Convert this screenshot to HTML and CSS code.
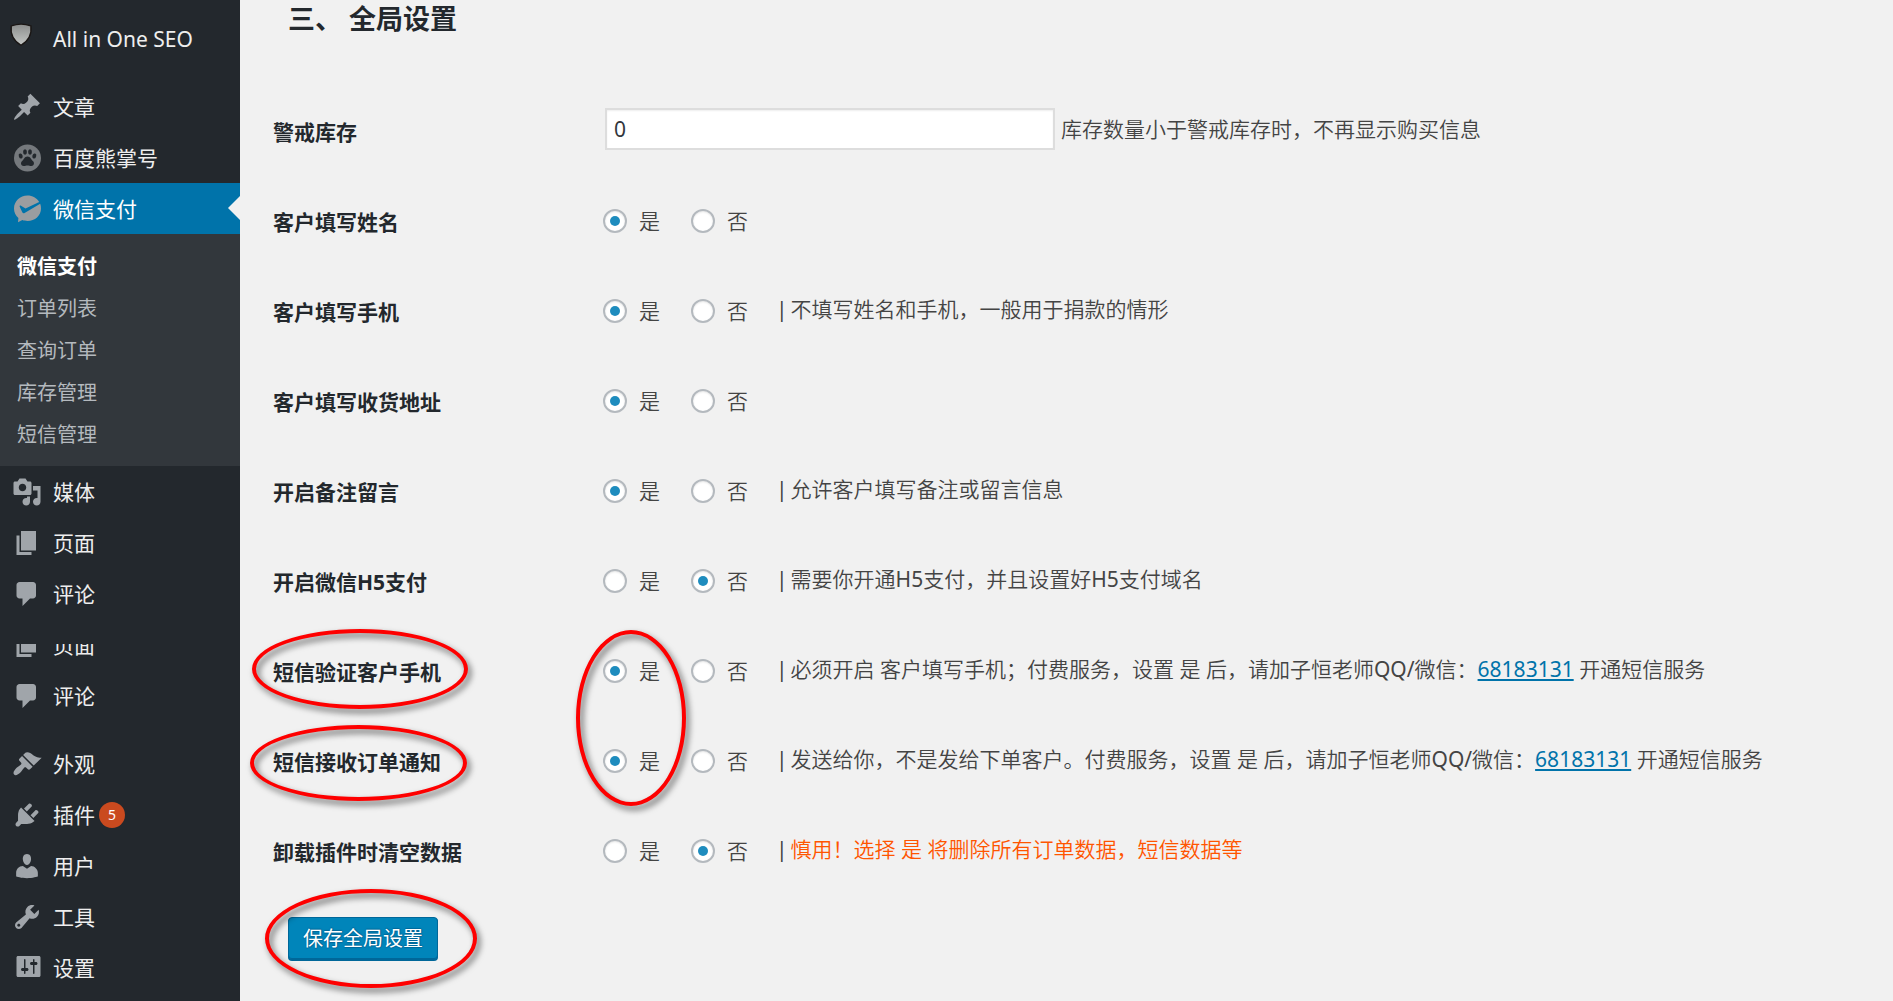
FILE: index.html
```
<!DOCTYPE html>
<html lang="zh-CN">
<head>
  <meta charset="UTF-8" />
  <meta name="viewport" content="width=device-width, initial-scale=1.0"/>
  <title>微信支付 - 全局设置</title>
  <link rel="stylesheet" href="styles.css">
</head>
<body>
  <!-- admin menu -->
  <nav class="menu">
    <a class="item" href="#">
      <svg class="icon" viewBox="0 0 20 20">
        <defs><linearGradient id="shield" x1="0" y1="0" x2="0" y2="1"><stop offset="0" stop-color="#8b8d8c"/><stop offset="1" stop-color="#c4c7c5"/></linearGradient></defs>
        <path fill="url(#shield)" stroke="#1a1614" stroke-width=".9" d="M-.5 1.2Q6 -1.100 12.600 1.200 13.700 9.400 6 14.200 -1.600 9.400 -.5 1.200z"/>
      </svg>
      All in One SEO
    </a>
    <a class="item group" href="#">
      <svg class="icon" viewBox="0 0 20 20"><path d="M10.440 3.020l1.820-1.820 6.360 6.350-1.830 1.820c-1.050-.68-2.480-.57-3.410.36l-.75.75c-.92.93-1.040 2.350-.35 3.410l-1.830 1.820-2.410-2.410-2.800 2.790c-.42.42-3.380 2.710-3.800 2.290s1.860-3.390 2.280-3.810l2.790-2.790L4.100 9.360l1.830-1.820c1.050.69 2.480.57 3.400-.36l.75-.75c.93-.92 1.050-2.350.36-3.410z"/></svg>
      文章
    </a>
    <a class="item" href="#">
      <svg class="icon dim" viewBox="0 0 30 30">
        <circle cx="15.500" cy="15" r="13.500"/>
        <g class="cut">
          <ellipse cx="8.700" cy="13" rx="1.900" ry="2.600" transform="rotate(-20 8.700 13)"/>
          <ellipse cx="13" cy="9" rx="1.900" ry="2.700"/>
          <ellipse cx="18" cy="9" rx="1.900" ry="2.700"/>
          <ellipse cx="22.300" cy="13" rx="1.900" ry="2.600" transform="rotate(20 22.300 13)"/>
          <path d="M15.500 13.500c3 0 3.600 3 5.400 4.600 2 1.900 1.100 5-1.600 4.900-1.500 0-2.400-.6-3.800-.6s-2.300.6-3.800.6c-2.700.1-3.600-3-1.600-4.900 1.800-1.600 2.400-4.600 5.400-4.600z"/>
        </g>
      </svg>
      百度熊掌号
    </a>
    <a class="item current" href="#">
      <svg class="icon" viewBox="0 0 30 30">
        <path fill="#9a9da0" d="M15.500 1.500c5 0 9.300 2.600 11.700 6.400L13.500 14.500 9 11.700c-.8-.4-1.600.2-1.300 1l2.600 5.600c.5.900 1.300 1.200 2.300.6L28.200 9.800c.6 1.500.8 3 .8 4.700 0 7-6 12.500-13.500 12.500-2 0-3.500-.3-5.100-.9L6 28.300l.4-4.300C3.600 21.700 2 18.300 2 14.500 2 7.300 8 1.500 15.500 1.500z"/>
      </svg>
      微信支付
    </a>
    <div class="submenu">
      <a class="active" href="#">微信支付</a>
      <a href="#">订单列表</a>
      <a href="#">查询订单</a>
      <a href="#">库存管理</a>
      <a href="#">短信管理</a>
    </div>
    <a class="item" href="#">
      <svg class="icon" viewBox="0 0 20 20"><path d="M13 11V4c0-.55-.45-1-1-1h-1.670L9 1H5L3.670 3H2c-.55 0-1 .45-1 1v7c0 .55.45 1 1 1h10c.55 0 1-.45 1-1zM7 4.500c1.380 0 2.500 1.120 2.500 2.500S8.380 9.500 7 9.500 4.500 8.380 4.500 7 5.620 4.500 7 4.500zM14 6h5v10.500c0 1.380-1.120 2.500-2.500 2.500S14 17.880 14 16.500s1.120-2.500 2.500-2.500c.17 0 .34.02.5.05V9h-3V6zm-4 8.050V13h2v3.500c0 1.380-1.120 2.500-2.500 2.500S7 17.880 7 16.500 8.120 14 9.500 14c.17 0 .34.02.5.05z"/></svg>
      媒体
    </a>
    <a class="item" href="#">
      <svg class="icon" viewBox="0 0 20 20"><path d="M6 15V2h10v13H6zm-1 1h8v2H3V5h2v11z"/></svg>
      页面
    </a>
    <a class="item" href="#">
      <svg class="icon" viewBox="0 0 20 20"><path d="M5 2h9c1.100 0 2 .9 2 2v7c0 1.100-.9 2-2 2h-2l-5 5v-5H5c-1.100 0-2-.9-2-2V4c0-1.100.9-2 2-2z"/></svg>
      评论
    </a>
    <!-- half hidden copy of the pages entry -->
    <a class="item half" href="#">
      <svg class="icon" viewBox="0 0 20 20"><path d="M6 15V2h10v13H6zm-1 1h8v2H3V5h2v11z"/></svg>
      页面
    </a>
    <a class="item" href="#">
      <svg class="icon" viewBox="0 0 20 20"><path d="M5 2h9c1.100 0 2 .9 2 2v7c0 1.100-.9 2-2 2h-2l-5 5v-5H5c-1.100 0-2-.9-2-2V4c0-1.100.9-2 2-2z"/></svg>
      评论
    </a>
    <a class="item group" href="#">
      <svg class="icon" viewBox="0 0 20 20"><path d="M14.480 11.060L7.410 3.990l1.500-1.500c.5-.56 2.300-.47 3.510.32 1.210.8 1.430 1.280 2.910 2.100 1.180.64 2.450 1.260 4.450.85zm-.71.71L6.700 4.700 4.930 6.470c-.39.39-.39 1.020 0 1.410l1.060 1.060c.39.39.39 1.030 0 1.420-.6.6-1.430 1.110-2.210 1.690-.35.26-.7.53-1.010.84C1.430 14.230.4 16.080 1.400 17.070c.99 1 2.840-.03 4.180-1.360.31-.31.58-.66.85-1.020.57-.78 1.080-1.610 1.690-2.210.39-.39 1.020-.39 1.410 0l1.060 1.060c.39.39 1.020.39 1.410 0z"/></svg>
      外观
    </a>
    <a class="item" href="#">
      <svg class="icon" viewBox="0 0 20 20"><path d="M13.110 4.360L9.870 7.600 8 5.730l3.240-3.240c.35-.34 1.050-.2 1.560.32.52.51.66 1.210.31 1.550zm-8 1.770l.91-1.120 9.010 9.010-1.190.84c-.71.71-2.630 1.160-3.820 1.160H6.140L4.900 17.260c-.59.59-1.540.59-2.120 0-.59-.58-.59-1.530 0-2.120l1.240-1.240v-3.880c0-1.130.4-3.190 1.090-3.890zm7.260 3.970l3.240-3.240c.34-.35 1.040-.21 1.550.31.52.51.66 1.210.31 1.550l-3.240 3.250z"/></svg>
      插件<span class="count">5</span>
    </a>
    <a class="item" href="#">
      <svg class="icon" viewBox="0 0 20 20"><path d="M10 9.250c-2.270 0-2.730-3.440-2.730-3.440C7 4.020 7.820 2 9.970 2c2.160 0 2.980 2.020 2.710 3.810 0 0-.41 3.440-2.680 3.440zm0 2.570L12.720 10c2.390 0 4.520 2.330 4.520 4.530v2.490s-3.650 1.130-7.240 1.130c-3.650 0-7.240-1.130-7.240-1.130v-2.490c0-2.250 1.940-4.480 4.470-4.480z"/></svg>
      用户
    </a>
    <a class="item" href="#">
      <svg class="icon" viewBox="0 0 20 20"><path d="M16.680 9.770c-1.340 1.340-3.300 1.670-4.950.99l-5.410 6.520c-.99.99-2.590.99-3.580 0s-.99-2.590 0-3.570l6.520-5.420c-.68-1.650-.35-3.610.99-4.950 1.280-1.280 3.120-1.620 4.720-1.060l-2.890 2.890 2.820 2.820 2.860-2.870c.53 1.580.18 3.390-1.080 4.650zM3.810 16.210c.4.39 1.040.39 1.430 0 .4-.4.4-1.040 0-1.430-.39-.4-1.030-.4-1.430 0-.39.39-.39 1.030 0 1.430z"/></svg>
      工具
    </a>
    <a class="item" href="#">
      <svg class="icon" viewBox="-1 1 20 20"><path d="M18 16V4c0-.55-.45-1-1-1H3c-.55 0-1 .45-1 1v12c0 .55.45 1 1 1h14c.55 0 1-.45 1-1zM8 11h1c.55 0 1 .45 1 1s-.45 1-1 1H8v1.500c0 .28-.22.5-.5.5s-.5-.22-.5-.5V13H6c-.55 0-1-.45-1-1s.45-1 1-1h1V5.500c0-.28.22-.5.5-.5s.5.22.5.5V11zm5-2h-1c-.55 0-1-.45-1-1s.45-1 1-1h1V5.500c0-.28.22-.5.5-.5s.5.22.5.5V7h1c.55 0 1 .45 1 1s-.45 1-1 1h-1v5.500c0 .28-.22.5-.5.5s-.5-.22-.5-.5V9z"/></svg>
      设置
    </a>
  </nav>

  <!-- settings form -->
  <main class="content">
    <h2>三、 全局设置</h2>
    <form>
      <table class="form-table">
        <tr>
          <th><label for="stock">警戒库存</label></th>
          <td><div class="field">
            <input type="text" id="stock" value="0">
            <span class="desc">库存数量小于警戒库存时，不再显示购买信息</span>
          </div></td>
        </tr>
        <tr>
          <th>客户填写姓名</th>
          <td><div class="field">
            <label><input type="radio" name="username" checked>是</label>
            <label><input type="radio" name="username">否</label>
          </div></td>
        </tr>
        <tr>
          <th>客户填写手机</th>
          <td><div class="field">
            <label><input type="radio" name="phone" checked>是</label>
            <label><input type="radio" name="phone">否</label>
            <span class="desc note">不填写姓名和手机，一般用于捐款的情形</span>
          </div></td>
        </tr>
        <tr>
          <th>客户填写收货地址</th>
          <td><div class="field">
            <label><input type="radio" name="address" checked>是</label>
            <label><input type="radio" name="address">否</label>
          </div></td>
        </tr>
        <tr>
          <th>开启备注留言</th>
          <td><div class="field">
            <label><input type="radio" name="remark" checked>是</label>
            <label><input type="radio" name="remark">否</label>
            <span class="desc note">允许客户填写备注或留言信息</span>
          </div></td>
        </tr>
        <tr>
          <th>开启微信H5支付</th>
          <td><div class="field">
            <label><input type="radio" name="h5pay">是</label>
            <label><input type="radio" name="h5pay" checked>否</label>
            <span class="desc note">需要你开通H5支付，并且设置好H5支付域名</span>
          </div></td>
        </tr>
        <tr>
          <th>短信验证客户手机<span class="ring ring-verify"></span></th>
          <td><div class="field">
            <label><input type="radio" name="verify" checked>是</label>
            <label><input type="radio" name="verify">否</label>
            <span class="desc note">必须开启 客户填写手机；付费服务，设置 是 后，请加子恒老师QQ/微信：<a href="#">68183131</a> 开通短信服务</span>
            <span class="ring ring-radios"></span>
          </div></td>
        </tr>
        <tr>
          <th>短信接收订单通知<span class="ring ring-notify"></span></th>
          <td><div class="field">
            <label><input type="radio" name="notify" checked>是</label>
            <label><input type="radio" name="notify">否</label>
            <span class="desc note">发送给你，不是发给下单客户。付费服务，设置 是 后，请加子恒老师QQ/微信：<a href="#">68183131</a> 开通短信服务</span>
          </div></td>
        </tr>
        <tr>
          <th>卸载插件时清空数据</th>
          <td><div class="field">
            <label><input type="radio" name="clear">是</label>
            <label><input type="radio" name="clear" checked>否</label>
            <span class="desc note warn">慎用！选择 是 将删除所有订单数据，短信数据等</span>
          </div></td>
        </tr>
      </table>
      <div class="submit">
        <button type="submit" class="button">保存全局设置</button>
        <span class="ring ring-save"></span>
      </div>
    </form>
  </main>
</body>
</html>
```
FILE: styles.css
```
* {
  box-sizing: border-box;
}
body {
  margin: 0;
  min-height: 100vh;
  display: flex;
  background: #f1f1f1;
  color: #444;
  font-family: "Noto Sans", "Noto Sans CJK SC", sans-serif;
  font-size: 21px;
  line-height: 30px;
}

/* admin menu */
.menu {
  flex: none;
  width: 240px;
  padding-top: 13px;
  background: #23282d;
}
.item {
  position: relative;
  display: flex;
  align-items: center;
  height: 51px;
  padding-left: 12px;
  color: #eee;
  text-decoration: none;
}
.item.group {
  margin-top: 17px;
}
.item.half {
  height: 26px;
  margin-top: 25px;
  align-items: flex-end;
  padding-bottom: 10px;
  overflow: hidden;
}
.item.current {
  background: #0073aa;
  color: #fff;
}
.item.current::after {
  content: "";
  position: absolute;
  right: 0;
  top: 13px;
  border: 12px solid transparent;
  border-left: 0;
  border-right-color: #f1f1f1;
}
.icon {
  flex: none;
  width: 30px;
  height: 30px;
  margin-right: 11px;
  fill: #a0a5aa;
  overflow: visible;
}
.icon.dim {
  fill: #75797d;
}
.icon .cut {
  fill: #23282d;
}
.count {
  width: 26px;
  height: 26px;
  margin-left: 4px;
  border-radius: 50%;
  background: #ca4a1f;
  color: #fff;
  font-size: 14px;
  line-height: 26px;
  text-align: center;
}
.submenu {
  padding: 12px 0 10px;
  background: #32373c;
}
.submenu a {
  display: block;
  padding-left: 17px;
  color: #b4b9be;
  font-size: 20px;
  line-height: 42px;
  text-decoration: none;
}
.submenu a.active {
  color: #fff;
  font-weight: bold;
}

/* settings form */
.content {
  flex: 1;
  padding-left: 33px;
}
h2 {
  margin: 0 0 48px;
  padding-left: 15px;
  color: #23282d;
  font-size: 27px;
  line-height: 38px;
}
.form-table {
  width: 100%;
  border-collapse: collapse;
}
.form-table th,
.form-table td {
  position: relative;
  height: 90px;
  padding: 0;
  vertical-align: middle;
}
.form-table th {
  width: 330px;
  padding-top: 2px;
  color: #23282d;
  text-align: left;
}
.field {
  display: flex;
  align-items: center;
  font-family: "Noto Sans", "Noto Sans CJK SC DemiLight", "Noto Sans CJK SC", sans-serif;
}
.field label {
  display: flex;
  align-items: center;
  width: 88px;
}
input[type="text"] {
  width: 450px;
  height: 42px;
  margin: 0 6px 4px 2px;
  padding: 0 7px;
  border: 2px solid #ddd;
  background: #fff;
  box-shadow: inset 0 1px 2px rgba(0, 0, 0, 0.07);
  color: #32373c;
  font: inherit;
}
input[type="radio"] {
  appearance: none;
  display: grid;
  place-items: center;
  width: 24px;
  height: 24px;
  margin: 0 12px 0 0;
  border: 2px solid #b4b9be;
  border-radius: 50%;
  background: #fff;
  box-shadow: inset 0 1px 2px rgba(0, 0, 0, 0.1);
}
input[type="radio"]:checked::before {
  content: "";
  width: 10px;
  height: 10px;
  border-radius: 50%;
  background: #1e8cbe;
}
.desc {
  margin-bottom: 4px;
}
.note {
  margin-left: -3px;
}
.note::before {
  content: "|";
  margin-right: 3px;
  color: #444;
}
.warn {
  color: #ff5500;
}
.desc a {
  color: #0073aa;
}
.submit {
  position: relative;
  padding: 21px 0 0 15px;
}
.button {
  height: 43px;
  padding: 0 14px;
  border: 1px solid #006799;
  border-radius: 4px;
  background: #0085ba;
  box-shadow: inset 0 -1px 0 #006799, 0 1px 0 #006799;
  color: #fff;
  font: inherit;
  font-size: 20px;
  text-shadow: 0 -1px 1px #006799, 1px 0 1px #006799, 0 1px 1px #006799;
}

/* red marker rings over the form */
.ring {
  position: absolute;
  border: 4px solid #fe0000;
  border-radius: 50%;
  filter: drop-shadow(3px 4px 3px rgba(0, 0, 0, 0.6));
  pointer-events: none;
}
.ring-verify {
  left: -21px;
  top: 3px;
  width: 216px;
  height: 80px;
}
.ring-notify {
  left: -23px;
  top: 9px;
  width: 217px;
  height: 76px;
}
.ring-radios {
  left: -27px;
  top: 4px;
  width: 110px;
  height: 176px;
}
.ring-save {
  left: -8px;
  top: -7px;
  width: 212px;
  height: 99px;
}
```
